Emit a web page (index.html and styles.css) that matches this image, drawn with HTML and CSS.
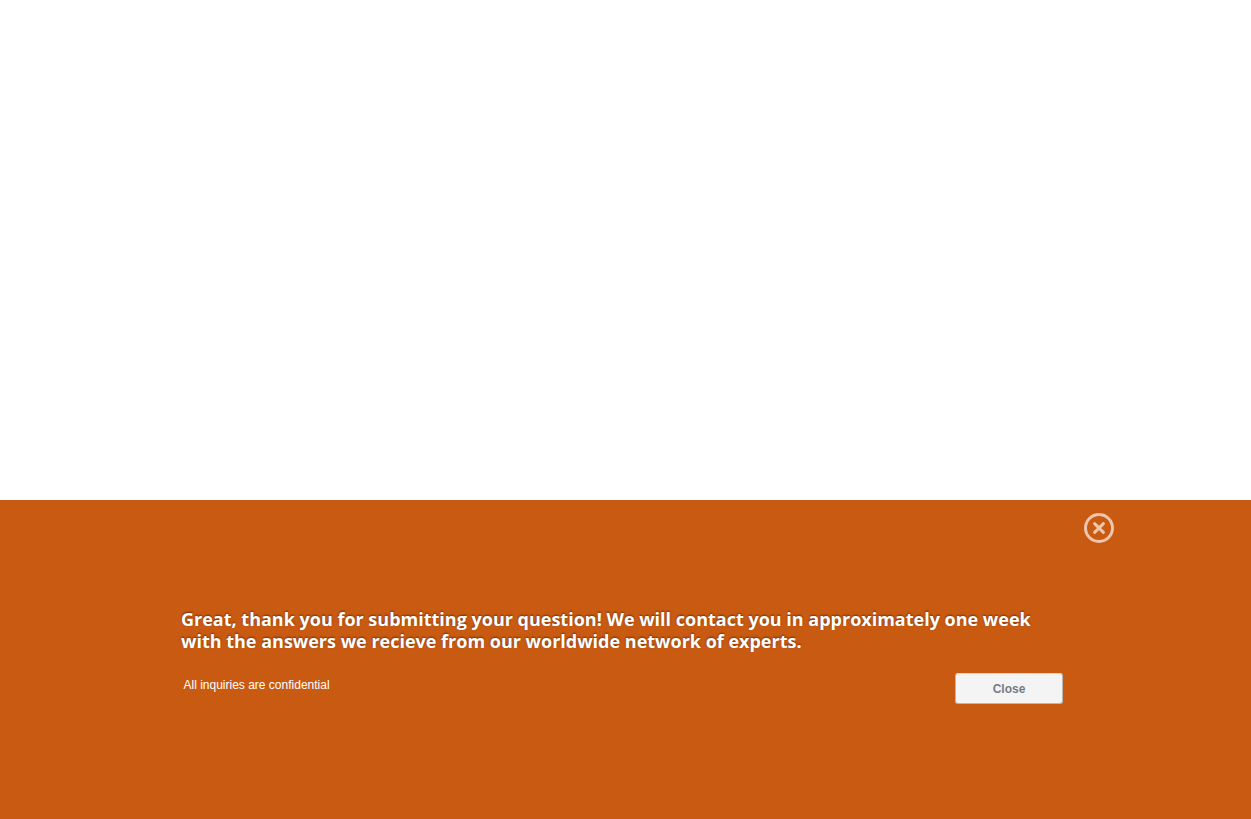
FILE: index.html
```html
<!DOCTYPE html>
<html lang="en">
<head>
<meta charset="utf-8">
<title>Question submitted</title>
<link rel="stylesheet" href="styles.css">
</head>
<body>
<section class="panel">
  <div class="panel-top">
    <svg class="dismiss" viewBox="0 0 30 30" role="img" aria-label="Close"><circle cx="15" cy="15" r="13.5"/><path d="M10.6 10.6l8.8 8.8M19.4 10.6l-8.8 8.8"/></svg>
  </div>
  <div class="content">
    <h1 class="message">Great, thank you for submitting your question! We will contact you in approximately one week<br>with the answers we recieve from our worldwide network of experts.</h1>
    <div class="footer">
      <p class="note">All inquiries are confidential</p>
      <button class="close" type="button">Close</button>
    </div>
  </div>
</section>
</body>
</html>
```
FILE: styles.css
```css
body { margin: 0; background: #fff; }
.panel { box-sizing: border-box; height: 319px; margin-top: 500px; padding-top: 13px; background: #c95a12; }
.panel-top { display: flex; justify-content: flex-end; padding-right: 137px; height: 30px; }
.dismiss { width: 30px; height: 30px; fill: none; stroke: #efc5ae; stroke-width: 3; }
.dismiss path { stroke-width: 3; stroke-linecap: round; }
.content { width: 882px; margin: 65px 0 0 181px; }
.message { margin: 0; font: 700 18px/22px "Open Sans", sans-serif; color: #fff; white-space: nowrap; text-shadow: 0 -1px 2px rgba(0,0,0,.45); }
.footer { display: flex; justify-content: space-between; align-items: flex-start; margin-top: 21px; }
.note { margin: 5px 0 0 2.5px; font: 12px/14px "Liberation Sans", Arial, sans-serif; color: #fff; }
.close { width: 108px; height: 31px; padding: 0; border: 1px solid #b9b6b8; border-top-color: #ddd3ce; border-radius: 3px; background: #f4f4f4; color: #757c88; font: 700 12px/14px "Liberation Sans", Arial, sans-serif; }
```
